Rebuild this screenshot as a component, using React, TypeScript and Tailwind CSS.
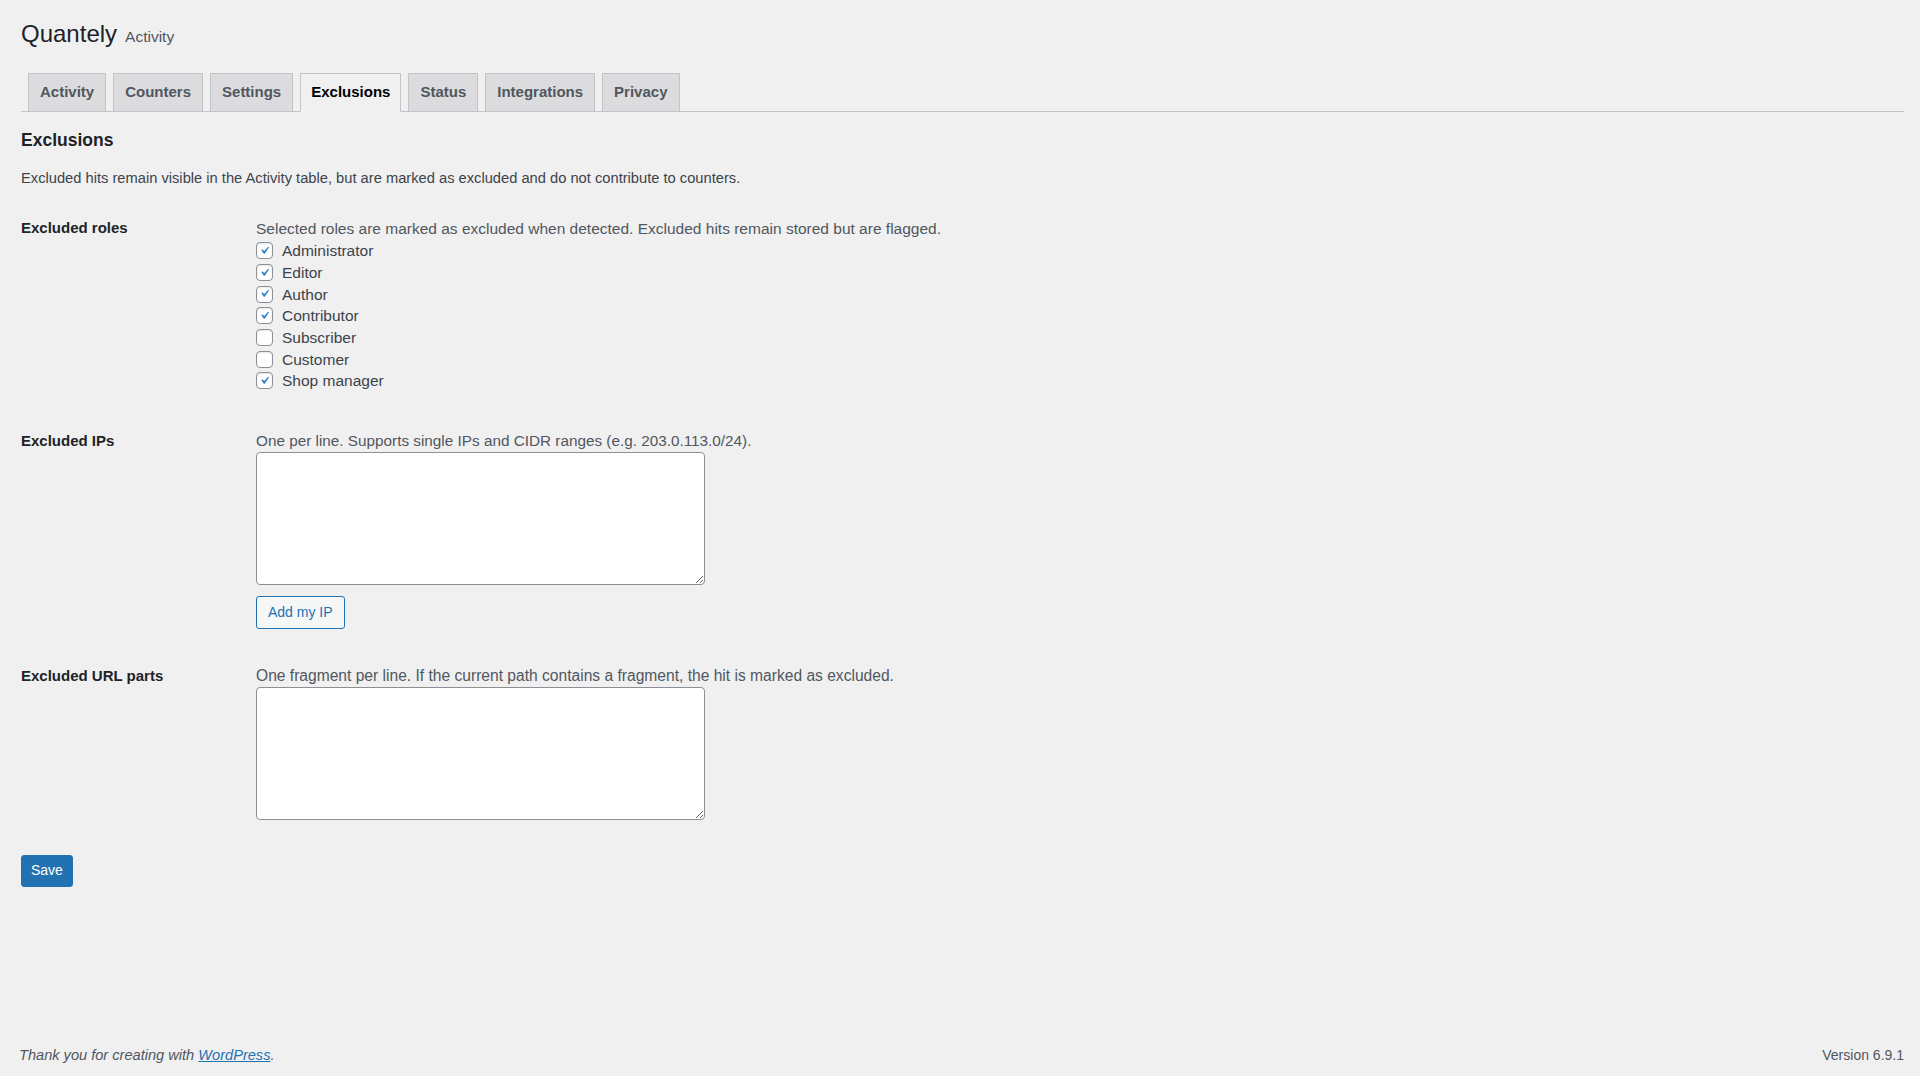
import { useState } from 'react'

const tabs = ['Activity', 'Counters', 'Settings', 'Exclusions', 'Status', 'Integrations', 'Privacy']

const roles: { name: string; checked: boolean }[] = [
  { name: 'Administrator', checked: true },
  { name: 'Editor', checked: true },
  { name: 'Author', checked: true },
  { name: 'Contributor', checked: true },
  { name: 'Subscriber', checked: false },
  { name: 'Customer', checked: false },
  { name: 'Shop manager', checked: true },
]

const font = "font-['Liberation_Sans',Arial,sans-serif]"

function Checkbox({ checked, onToggle }: { checked: boolean; onToggle: () => void }) {
  return (
    <button
      type="button"
      onClick={onToggle}
      className="w-[17px] h-[17px] shrink-0 rounded-[4px] border border-[#8c8f94] bg-white flex items-center justify-center shadow-[inset_0_1px_2px_rgba(0,0,0,0.1)]"
    >
      {checked && (
        <svg viewBox="0 0 20 20" className="w-[19px] h-[19px] -mt-[1px]">
          <path d="M14.83 4.89l1.34.94-5.81 8.38H9.02L5.78 9.67l1.34-1.25 2.57 2.4z" fill="#3582c4" />
        </svg>
      )}
    </button>
  )
}

function Row({ label, children, className = '' }: { label: string; children: React.ReactNode; className?: string }) {
  return (
    <div className={`flex ${className}`}>
      <div className="w-[235px] shrink-0 text-[15px] leading-[22px] font-semibold text-[#1d2327]">{label}</div>
      <div className="flex flex-col">{children}</div>
    </div>
  )
}

export default function App() {
  const [active, setActive] = useState('Exclusions')
  const [checks, setChecks] = useState(roles.map((r) => r.checked))

  return (
    <div className={`min-h-screen bg-[#f0f0f1] flex flex-col text-[#3c434a] ${font}`}>
      <div className="pl-[21px] pr-[16px]">
        {/* Heading */}
        <div className="pt-[18px] flex items-baseline gap-[8px]">
          <h1 className="text-[24px] leading-[32px] text-[#1d2327]">Quantely</h1>
          <span className="text-[15.5px] text-[#50575e]">Activity</span>
        </div>

        {/* Tabs */}
        <div className="mt-[23px] flex gap-[7px] pl-[7px] border-b border-[#c3c4c7]">
          {tabs.map((t) => (
            <button
              key={t}
              onClick={() => setActive(t)}
              className={`h-[39px] -mb-[1px] border border-[#c3c4c7] text-[15px] font-semibold ${
                active === t
                  ? 'px-[10px] bg-[#f0f0f1] border-b-[#f0f0f1] text-black'
                  : 'px-[11px] bg-[#dcdcde] text-[#50575e]'
              }`}
            >
              {t}
            </button>
          ))}
        </div>

        <h2 className="mt-[14px] text-[17.5px] leading-[28px] font-semibold text-[#1d2327]">Exclusions</h2>
        <p className="mt-[13px] text-[14.7px] leading-[22px]">
          Excluded hits remain visible in the Activity table, but are marked as excluded and do not contribute to counters.
        </p>

        {/* Roles */}
        <Row label="Excluded roles" className="mt-[28px]">
          <div className="pt-[1px] flex flex-col">
            <p className="text-[15.5px] leading-[22px] text-[#50575e]">
              Selected roles are marked as excluded when detected. Excluded hits remain stored but are flagged.
            </p>
            {roles.map((r, i) => (
              <label key={r.name} className="flex items-center gap-[9px] h-[21.7px] text-[15.5px] text-[#3c434a]">
                <Checkbox
                  checked={checks[i]}
                  onToggle={() => setChecks(checks.map((c, j) => (j === i ? !c : c)))}
                />
                {r.name}
              </label>
            ))}
          </div>
        </Row>

        {/* IPs */}
        <Row label="Excluded IPs" className="mt-[38px]">
          <p className="text-[15.3px] leading-[22px] text-[#50575e]">
            One per line. Supports single IPs and CIDR ranges (e.g. 203.0.113.0/24).
          </p>
          <textarea className="w-[449px] h-[133px] rounded-[4px] border border-[#8c8f94] bg-white" />
          <button className="mt-[11px] self-start h-[33px] px-[11px] rounded-[3px] border border-[#2271b1] bg-[#f6f7f7] text-[#2271b1] text-[14px]">
            Add my IP
          </button>
        </Row>

        {/* URL parts */}
        <Row label="Excluded URL parts" className="mt-[36px]">
          <p className="text-[15.6px] leading-[22px] text-[#50575e]">
            One fragment per line. If the current path contains a fragment, the hit is marked as excluded.
          </p>
          <textarea className="w-[449px] h-[133px] rounded-[4px] border border-[#8c8f94] bg-white" />
        </Row>

        <button className="mt-[35px] h-[32px] px-[9px] rounded-[3px] bg-[#2271b1] border border-[#2271b1] text-white text-[14px]">
          Save
        </button>
      </div>

      {/* Footer */}
      <div className="mt-auto pl-[19px] pr-[16px] pb-[10px] flex justify-between items-baseline leading-[22px] text-[#50575e]">
        <span className="italic text-[14.6px]">
          Thank you for creating with{' '}
          <a href="#" className="text-[#2271b1] underline">
            WordPress
          </a>
          .
        </span>
        <span className="text-[14px]">Version 6.9.1</span>
      </div>
    </div>
  )
}
